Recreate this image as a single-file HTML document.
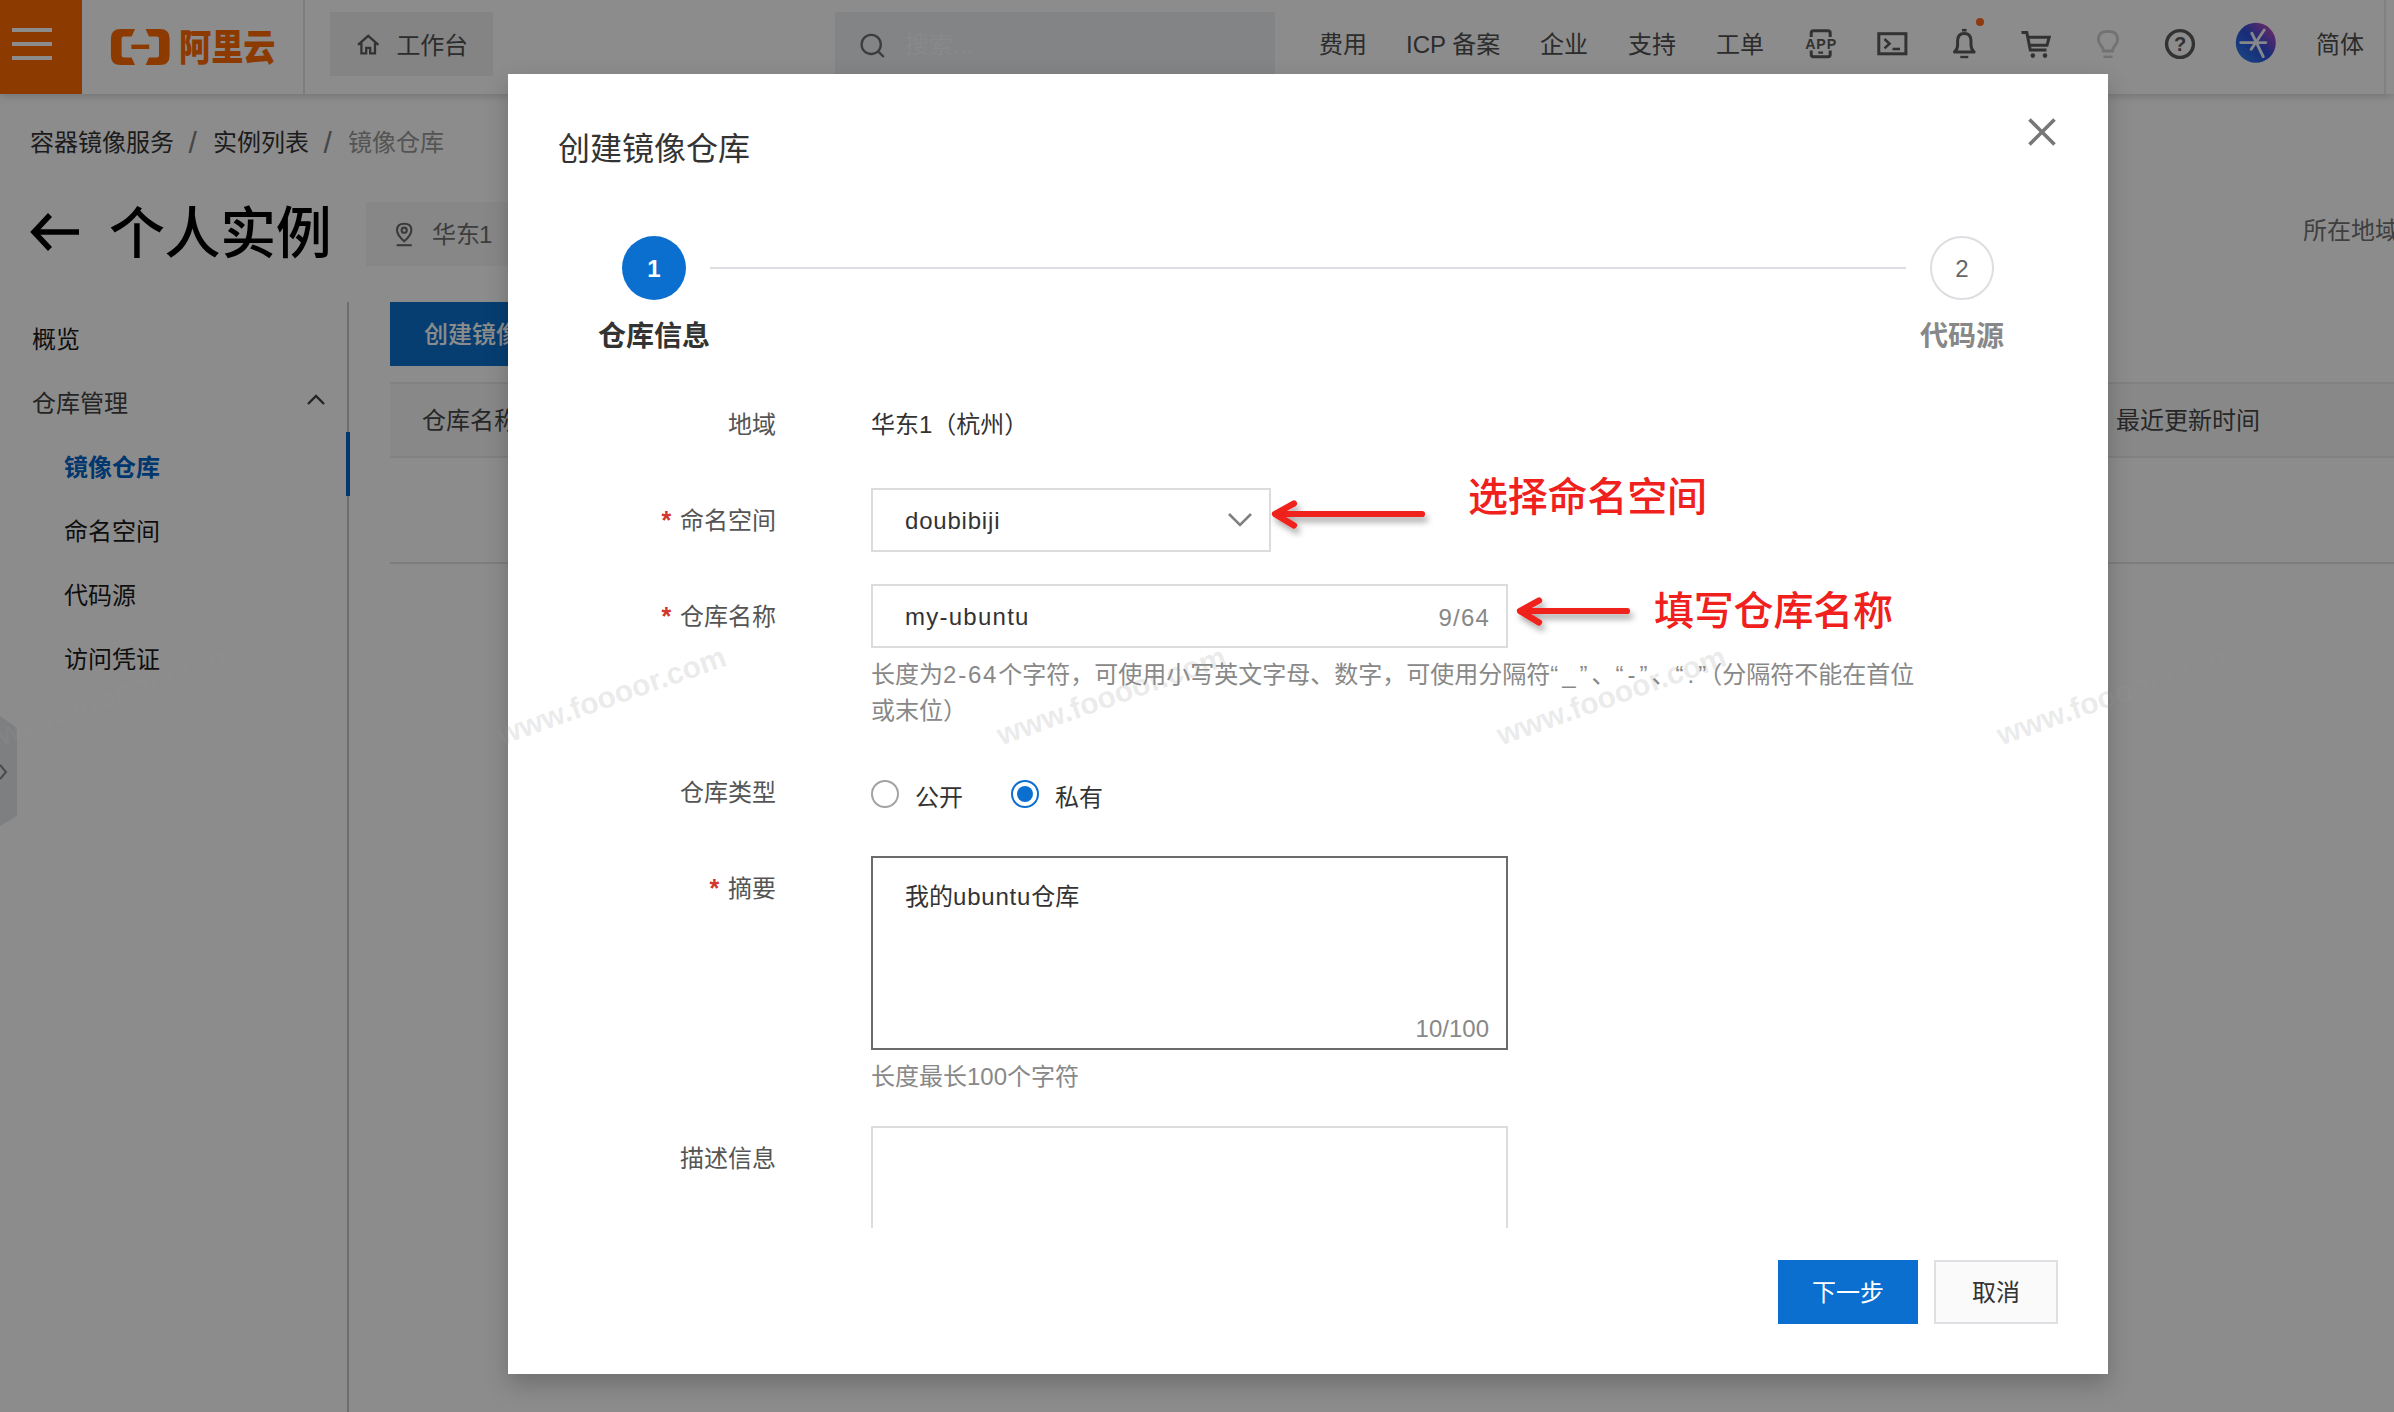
<!DOCTYPE html>
<html lang="zh-CN">
<head>
<meta charset="utf-8">
<title>创建镜像仓库</title>
<style>
*{box-sizing:border-box;margin:0;padding:0}
html,body{width:2394px;height:1412px;overflow:hidden}
body{font-family:"Liberation Sans","Noto Sans CJK SC",sans-serif;background:#f7f7f7;color:#333;position:relative;font-size:24px}
.abs{position:absolute}
.t{position:absolute;white-space:nowrap;line-height:1;margin-top:1px}
/* ---------- underlying page ---------- */
#page{position:absolute;left:0;top:0;width:2394px;height:1412px;background:#fff}
#hdr{position:absolute;left:0;top:0;width:2394px;height:94px;background:#fff;box-shadow:0 2px 8px rgba(0,0,0,.18)}
#burger{position:absolute;left:0;top:0;width:82px;height:94px;background:#ff6a00}
#burger i{position:absolute;left:12px;width:40px;height:4px;background:#fff}
.navt{color:#505050;font-size:24px}
.hbtn{position:absolute;top:12px;height:64px;background:#f0f1f2}
.wm{position:absolute;white-space:nowrap;line-height:1;font-size:30px;font-weight:700;color:rgba(150,150,150,.2);transform:rotate(-19.5deg);transform-origin:0 50%;font-family:'Liberation Sans',sans-serif}
/* overlay */
#mask{position:absolute;left:0;top:0;width:2394px;height:1412px;background:rgba(0,0,0,.45)}
/* ---------- modal ---------- */
#dlg{position:absolute;left:508px;top:74px;width:1600px;height:1300px;background:#fff;box-shadow:0 10px 22px rgba(0,0,0,.21)}

#dlg .lbl{position:absolute;white-space:nowrap;line-height:1;right:1332px;font-size:24px;color:#555;margin-top:1px}
#dlg .lbl b{position:absolute;left:-18.5px;top:-1px;color:#d2352b;font-weight:700;font-family:"Liberation Sans",sans-serif;font-size:25px;line-height:1}
#dlg .help{position:absolute;left:363px;font-size:24px;line-height:36px;color:#888;white-space:nowrap}
#dlg .box{position:absolute;left:363px;border:2px solid #dcdcdd;background:#fff}
#dlg .help .d{letter-spacing:1.8px}
#dlg .help .q{letter-spacing:4px}
.red{color:#f0201c;font-weight:500}
</style>
</head>
<body>
<div id="page">
  <div id="hdr">
    <div id="burger"><i style="top:28px"></i><i style="top:42px"></i><i style="top:56px"></i></div>
    <!-- logo -->
    <svg class="abs" style="left:108px;top:26px" width="172" height="44" viewBox="0 0 172 44">
      <path d="M27 3 H12.5 Q2.9 3 2.9 12.5 V29.5 Q2.9 39 12.5 39 H27 L23.6 31.6 H15.6 Q13.6 31.6 13.6 29.6 V12.4 Q13.6 10.4 15.6 10.4 H23.6 Z" fill="#ff6a00"/>
      <path d="M37.6 3 H52 Q61.6 3 61.6 12.5 V29.5 Q61.6 39 52 39 H37.6 L41 31.6 H49 Q51 31.6 51 29.6 V12.4 Q51 10.4 49 10.4 H41 Z" fill="#ff6a00"/>
      <rect x="23.4" y="18.6" width="17.8" height="4.4" fill="#ff6a00"/>
      <text x="71" y="35.2" font-family="'Liberation Sans','Noto Sans CJK SC',sans-serif" font-weight="900" font-size="37" fill="#ff6a00" textLength="96.5" lengthAdjust="spacingAndGlyphs">阿里云</text>
    </svg>
    <div class="abs" style="left:303px;top:0;width:2px;height:94px;background:#e3e3e3"></div>
    <!-- workbench -->
    <div class="hbtn" style="left:330px;width:163px;background:#f1f1f2"></div>
    <svg class="abs" style="left:355px;top:31px" width="26" height="26" viewBox="0 0 26 26" fill="none" stroke="#5c5c5c" stroke-width="2.3" stroke-linejoin="miter"><path d="M3 13.8 L13.2 4.8 L23.4 13.8"/><path d="M6.4 12 V22.4 H11.2 V16.8 H15.2 V22.4 H20 V12"/></svg>
    <div class="t navt" style="left:396.5px;top:33px;letter-spacing:-.3px">工作台</div>
    <!-- search -->
    <div class="hbtn" style="left:835px;width:440px;background:#eff0f2"></div>
    <svg class="abs" style="left:858px;top:31px" width="30" height="30" viewBox="0 0 30 30" fill="none" stroke="#6e6e6e" stroke-width="2.3"><circle cx="13.2" cy="13.4" r="9.6"/><path d="M20.4 20.6 L25.8 26"/></svg>
    <div class="t" style="left:905px;top:32px;font-size:24px;color:#f9f9fa">搜索...</div>
    <!-- nav -->
    <div class="t navt" style="left:1319px;top:32px">费用</div>
    <div class="t navt" style="left:1406px;top:32px">ICP 备案</div>
    <div class="t navt" style="left:1540px;top:32px">企业</div>
    <div class="t navt" style="left:1628px;top:32px">支持</div>
    <div class="t navt" style="left:1716px;top:32px">工单</div>
    <!-- icons -->
    <svg class="abs" style="left:1800px;top:24px" width="40" height="40" viewBox="0 0 40 40" fill="none" stroke="#5c5c5c" stroke-width="3" stroke-linejoin="round">
      <path d="M11.2 13 V9 Q11.2 6.8 13.4 6.8 H28 Q30.2 6.8 30.2 9 V13"/><path d="M11.2 26.5 V30.5 Q11.2 32.7 13.4 32.7 H28 Q30.2 32.7 30.2 30.5 V26.5"/><path d="M18.3 28.6 H23.1" stroke-width="2.2"/>
      <text x="20.7" y="24.6" text-anchor="middle" font-family="'Liberation Sans',sans-serif" font-weight="700" font-size="14.2" stroke="none" fill="#5c5c5c" textLength="31" lengthAdjust="spacing">APP</text>
    </svg>
    <svg class="abs" style="left:1872px;top:24px" width="40" height="40" viewBox="0 0 40 40" fill="none" stroke="#5c5c5c" stroke-width="3"><rect x="6.8" y="9.7" width="27.1" height="20.1"/><path d="M12.5 15 L17.5 19.7 L12.5 24.4" stroke-width="2.6"/><path d="M20.5 25 H28" stroke-width="2.6"/></svg>
    <svg class="abs" style="left:1944px;top:24px" width="40" height="40" viewBox="0 0 40 40" fill="none" stroke="#5c5c5c" stroke-width="3" stroke-linejoin="round"><path d="M10.5 28 Q13.6 25.5 13.6 21 V17 Q13.6 9.6 20.3 9.6 Q27 9.6 27 17 V21 Q27 25.5 30.1 28 Z"/><path d="M18 6.2 H22.6" stroke-width="2.6"/><path d="M16.3 33 H24.3" stroke-width="2.4"/></svg>
    <div class="abs" style="left:1975.8px;top:17.8px;width:8.6px;height:8.6px;border-radius:50%;background:#ff6a1a"></div>
    <svg class="abs" style="left:2016px;top:24px" width="40" height="40" viewBox="0 0 40 40" fill="none" stroke="#5c5c5c" stroke-width="3" stroke-linejoin="miter"><path d="M5.5 8.5 H10.8 L14.3 26 H30.5"/><path d="M11.8 13.2 H33.2 L31 21.3 H13.4"/><circle cx="16.8" cy="31.6" r="2.3" fill="#5c5c5c" stroke="none"/><circle cx="29" cy="31.6" r="2.3" fill="#5c5c5c" stroke="none"/></svg>
    <svg class="abs" style="left:2088px;top:24px" width="40" height="40" viewBox="0 0 40 40" fill="none" stroke="#cfcfcf" stroke-width="2.8"><path d="M15.3 27 Q15.3 24 13 21.5 Q10.3 18.5 10.3 15.2 Q10.3 7.4 20 7.4 Q29.7 7.4 29.7 15.2 Q29.7 18.5 27 21.5 Q24.7 24 24.7 27 Z"/><path d="M15.5 32.8 H24.5" stroke-width="2.4"/></svg>
    <svg class="abs" style="left:2160px;top:24px" width="40" height="40" viewBox="0 0 40 40" fill="none" stroke="#5c5c5c" stroke-width="3.4"><circle cx="20" cy="20" r="13.4"/><text x="20" y="27" text-anchor="middle" font-family="'Liberation Sans',sans-serif" font-weight="700" font-size="20" stroke="none" fill="#5c5c5c">?</text></svg>
    <svg class="abs" style="left:2234px;top:21px" width="44" height="44" viewBox="0 0 44 44"><defs><linearGradient id="av" x1="0" y1="1" x2="1" y2="0"><stop offset="0" stop-color="#2f86f0"/><stop offset=".5" stop-color="#2c50dc"/><stop offset="1" stop-color="#e04ab8"/></linearGradient></defs><circle cx="21.8" cy="21.8" r="20" fill="url(#av)"/><g stroke="#fff" stroke-width="2.9" stroke-linecap="round" opacity=".95"><path d="M6.8 21.6 H31.8"/><path d="M30.2 9 L17.2 28.3"/><path d="M17.8 12.2 L29.2 35.6"/></g></svg>
    <div class="t navt" style="left:2316px;top:32px">简体</div>
    <div class="abs" style="left:2384px;top:0;width:2px;height:94px;background:#ebebeb"></div>
  </div>

  <!-- breadcrumb -->
  <div class="t" style="left:30px;top:130px;font-size:24px;color:#333">容器镜像服务</div>
  <div class="t" style="left:188.5px;top:127px;font-size:30px;color:#808080">/</div>
  <div class="t" style="left:213px;top:130px;font-size:24px;color:#333">实例列表</div>
  <div class="t" style="left:323.5px;top:127px;font-size:30px;color:#808080">/</div>
  <div class="t" style="left:348px;top:130px;font-size:24px;color:#999">镜像仓库</div>

  <!-- title -->
  <svg class="abs" style="left:28px;top:210px" width="54" height="44" viewBox="0 0 54 44" fill="none" stroke="#000" stroke-width="5.5"><path d="M22 5 L6 22 L22 39"/><path d="M6 22 H51"/></svg>
  <div class="t" style="left:109px;top:205px;font-size:56px;color:#000;letter-spacing:-.4px;font-weight:500">个人实例</div>
  <div class="abs" style="left:366px;top:202px;width:260px;height:64px;background:#f6f6f8"></div>
  <svg class="abs" style="left:390px;top:219px" width="28" height="30" viewBox="0 0 28 30" fill="none" stroke="#6a6a6a" stroke-width="2.1"><path d="M14.2 22.3 Q7 15.8 7 11.2 Q7 4.8 14.2 4.8 Q21.4 4.8 21.4 11.2 Q21.4 15.8 14.2 22.3 Z"/><circle cx="14.2" cy="11.2" r="2.6"/><path d="M6.6 26.2 H21.8"/></svg>
  <div class="t" style="left:432px;top:222px;font-size:24px;color:#707070">华东<span style="letter-spacing:-1.5px;margin-left:-1px">1</span></div>
  <div class="t" style="left:2303px;top:218px;font-size:24px;color:#747474">所在地域</div>

  <!-- sidebar -->
  <div class="abs" style="left:347px;top:302px;width:2px;height:1110px;background:#c6c6c6"></div>
  <div class="abs" style="left:346px;top:432px;width:4px;height:64px;background:#0064c8"></div>
  <div class="t" style="left:32px;top:327px;color:#1a1a1a">概览</div>
  <div class="t" style="left:32px;top:391px;color:#444">仓库管理</div>
  <svg class="abs" style="left:304px;top:390px" width="24" height="20" viewBox="0 0 24 20" fill="none" stroke="#444" stroke-width="2.4"><path d="M4 14 L12 6 L20 14"/></svg>
  <div class="t" style="left:64px;top:455px;color:#0064c8;font-weight:700">镜像仓库</div>
  <div class="t" style="left:64px;top:519px;color:#1a1a1a">命名空间</div>
  <div class="t" style="left:64px;top:583px;color:#1a1a1a">代码源</div>
  <div class="t" style="left:64px;top:647px;color:#1a1a1a">访问凭证</div>
  <!-- collapse handle -->
  <svg class="abs" style="left:0;top:712px" width="20" height="118" viewBox="0 0 20 118"><path d="M0 4 L17 16 V104 L0 114 Z" fill="#e6e7e9"/><path d="M0 53 L6 60 L0 67" fill="none" stroke="#888" stroke-width="2"/></svg>

  <!-- toolbar + table -->
  <div class="abs" style="left:390px;top:302px;width:230px;height:64px;background:#0b72d0"></div>
  <div class="t" style="left:424px;top:322px;color:#fff;font-weight:500">创建镜像仓库</div>
  <div class="abs" style="left:390px;top:382px;width:2004px;height:76px;background:#f8f8f8;border-top:2px solid #ebecee;border-bottom:2px solid #ebecee"></div>
  <div class="t" style="left:422px;top:408px;color:#484848">仓库名称</div>
  <div class="t" style="left:2116px;top:408px;color:#484848">最近更新时间</div>
  <div class="abs" style="left:390px;top:562px;width:2004px;height:2px;background:#e3e4e6"></div>

</div>
<div id="mask"></div>
<div id="dlg">
  <div class="t" style="left:50px;top:58px;font-size:32px;color:#333">创建镜像仓库</div>
  <svg class="abs" style="left:1516px;top:40px" width="36" height="36" viewBox="0 0 36 36" fill="none" stroke="#777" stroke-width="3.6"><path d="M5.5 5.5 L30.5 30.5 M30.5 5.5 L5.5 30.5"/></svg>
  <!-- steps -->
  <div class="abs" style="left:202px;top:193px;width:1196px;height:2px;background:#dcdee1"></div>
  <div class="abs" style="left:114px;top:162px;width:64px;height:64px;border-radius:50%;background:#0b6fd0"></div>
  <div class="t" style="left:114px;top:182px;width:64px;text-align:center;font-size:24px;color:#fff;font-weight:700">1</div>
  <div class="abs" style="left:1422px;top:162px;width:64px;height:64px;border-radius:50%;border:2px solid #dcdee1;background:#fff"></div>
  <div class="t" style="left:1422px;top:182px;width:64px;text-align:center;font-size:24px;color:#666">2</div>
  <div class="t" style="left:46px;top:248px;width:200px;text-align:center;font-size:28px;font-weight:700;color:#333">仓库信息</div>
  <div class="t" style="left:1354px;top:248px;width:200px;text-align:center;font-size:28px;font-weight:700;color:#888">代码源</div>
  <!-- row: region -->
  <div class="lbl" style="top:338px">地域</div>
  <div class="t" style="left:363px;top:338px;font-size:24px;color:#333">华东1（杭州）</div>
  <!-- row: namespace -->
  <div class="lbl" style="top:434px"><b>*</b>命名空间</div>
  <div class="box" style="top:414px;width:400px;height:64px"></div>
  <div class="t" style="left:397px;top:434px;font-size:24px;color:#333;letter-spacing:.8px">doubibiji</div>
  <svg class="abs" style="left:716px;top:434px" width="32" height="24" viewBox="0 0 32 24" fill="none" stroke="#808080" stroke-width="2.6"><path d="M5 6 L16 17 L27 6"/></svg>
  <!-- row: repo name -->
  <div class="lbl" style="top:530px"><b>*</b>仓库名称</div>
  <div class="box" style="top:510px;width:637px;height:64px"></div>
  <div class="t" style="left:397px;top:530px;font-size:24px;color:#333;letter-spacing:1.25px">my-ubuntu</div>
  <div class="t" style="right:618px;top:531px;font-size:24px;color:#888;letter-spacing:1.2px">9/64</div>
  <div class="help" style="top:583px">长度为<span class="d">2-64</span>个字符，可使用小写英文字母、数字，可使用分隔符<span class="q">“_”</span>、<span class="q">“-”</span>、<span class="q">“.”</span>（分隔符不能在首位<br>或末位）</div>
  <!-- row: type -->
  <div class="lbl" style="top:706px">仓库类型</div>
  <div class="abs" style="left:363px;top:706px;width:28px;height:28px;border-radius:50%;border:2px solid #a3a3a3;background:#fff"></div>
  <div class="t" style="left:407px;top:711px;font-size:24px;color:#333">公开</div>
  <div class="abs" style="left:503px;top:706px;width:28px;height:28px;border-radius:50%;border:2px solid #0b6fd0;background:#fff"></div>
  <div class="abs" style="left:509px;top:712px;width:16px;height:16px;border-radius:50%;background:#0b6fd0"></div>
  <div class="t" style="left:547px;top:711px;font-size:24px;color:#333">私有</div>
  <!-- row: summary -->
  <div class="lbl" style="top:802px"><b>*</b>摘要</div>
  <div class="box" style="top:782px;width:637px;height:194px;border-color:#6b6b6b"></div>
  <div class="t" style="left:397px;top:810px;font-size:24px;color:#333">我的<span style="letter-spacing:.8px">ubuntu</span>仓库</div>
  <div class="t" style="right:619px;top:942px;font-size:24px;color:#888">10/100</div>
  <div class="help" style="top:985px">长度最长100个字符</div>
  <!-- row: description -->
  <div class="lbl" style="top:1072px">描述信息</div>
  <div class="box" style="top:1052px;width:637px;height:102px;border-bottom:none"></div>
  <!-- footer -->
  <div class="abs" style="left:1270px;top:1186px;width:140px;height:64px;background:#0b6fd0"></div>
  <div class="t" style="left:1270px;top:1206px;width:140px;text-align:center;font-size:24px;color:#fff">下一步</div>
  <div class="abs" style="left:1426px;top:1186px;width:124px;height:64px;background:#fafafa;border:2px solid #dedfe2"></div>
  <div class="t" style="left:1426px;top:1206px;width:124px;text-align:center;font-size:24px;color:#333">取消</div>
  <!-- red annotations -->
  <svg class="abs" style="left:740px;top:390px" width="700" height="260" viewBox="0 0 700 260" fill="none" stroke="#f0201c" stroke-width="6.2" stroke-linecap="round" stroke-linejoin="round">
    <defs><filter id="sh" x="-10%" y="-40%" width="120%" height="200%"><feDropShadow dx="3" dy="5" stdDeviation="3" flood-color="#000" flood-opacity=".35"/></filter></defs>
    <g filter="url(#sh)"><path d="M28 50 H174"/><path d="M46 39.5 L27 50 L46 61.5"/></g>
    <g filter="url(#sh)"><path d="M273 147 H379"/><path d="M291 136.5 L272 147 L291 158.5"/></g>
  </svg>
  <div class="t red" style="left:960px;top:402px;font-size:40px;letter-spacing:-.2px">选择命名空间</div>
  <div class="t red" style="left:1146px;top:516px;font-size:40px;letter-spacing:-.2px">填写仓库名称</div>

</div>
<div id="wms">
  <div class="wm" style="left:-2px;top:721px">www.foooor.com</div>
  <div class="wm" style="left:498px;top:721px">www.foooor.com</div>
  <div class="wm" style="left:998px;top:721px">www.foooor.com</div>
  <div class="wm" style="left:1498px;top:721px">www.foooor.com</div>
  <div class="wm" style="left:1998px;top:721px">www.foooor.com</div>
</div>
</body>
</html>
